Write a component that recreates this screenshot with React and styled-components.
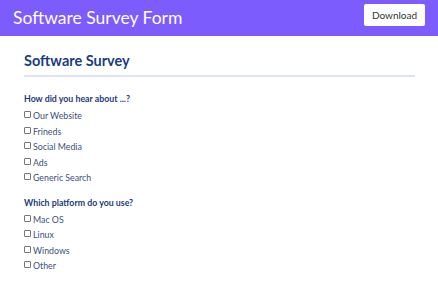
import React from "react";
import styled, { createGlobalStyle } from "styled-components";

const Global = createGlobalStyle`
  html, body { margin: 0; padding: 0; background: #fff; }
  body { font-family: "Lato", "Noto Sans", sans-serif; }
`;

const Header = styled.header`
  height: 36px;
  background: #7c5cfc;
  display: flex;
  align-items: center;
  justify-content: space-between;
  padding: 0 13px 0 13px;
  box-sizing: border-box;
`;

const Title = styled.h1`
  margin: 0;
  color: #fff;
  font-size: 17.5px;
  font-weight: 400;
  line-height: 1;
  margin-top: 0px;
`;

const DownloadButton = styled.button`
  background: #fff;
  border: none;
  border-radius: 2px;
  height: 22px;
  width: 61px;
  padding: 0;
  font-family: "Lato", sans-serif;
  font-size: 10px;
  color: #333;
  margin-top: -7px;
`;

const Main = styled.main`
  padding: 16px 23px 0 24px;
`;

const Heading = styled.h2`
  margin: 0;
  color: #1b3b86;
  font-size: 14.5px;
  font-weight: 700;
  line-height: 18px;
  padding-bottom: 5px;
  border-bottom: 2px solid #dde4ef;
`;

const Group = styled.fieldset`
  border: none;
  margin: 0;
  padding: 0;
  margin-top: ${(p) => p.$top}px;
`;

const Question = styled.legend`
  padding: 0;
  color: #1b3b7c;
  font-size: 8.8px;
  font-weight: 700;
  margin-bottom: 4px;
`;

const Option = styled.label`
  display: flex;
  align-items: center;
  gap: 2px;
  height: 15.5px;
  color: #3b4f7e;
  font-size: 8.8px;
`;

const Box = styled.input.attrs({ type: "checkbox" })`
  appearance: none;
  width: 7px;
  height: 7px;
  margin: 0 0 2px 0;
  border: 1px solid #777;
  border-radius: 1px;
  background: #fff;
`;

const groups = [
  { q: "How did you hear about ...?", top: 16, opts: ["Our Website", "Frineds", "Social Media", "Ads", "Generic Search"] },
  { q: "Which platform do you use?", top: 11, opts: ["Mac OS", "Linux", "Windows", "Other"] },
];

export default function App() {
  return (
    <>
      <Global />
      <Header>
        <Title>Software Survey Form</Title>
        <DownloadButton>Download</DownloadButton>
      </Header>
      <Main>
        <Heading>Software Survey</Heading>
        {groups.map((g) => (
          <Group key={g.q} $top={g.top}>
            <Question>{g.q}</Question>
            {g.opts.map((o) => (
              <Option key={o}>
                <Box />
                {o}
              </Option>
            ))}
          </Group>
        ))}
      </Main>
    </>
  );
}
